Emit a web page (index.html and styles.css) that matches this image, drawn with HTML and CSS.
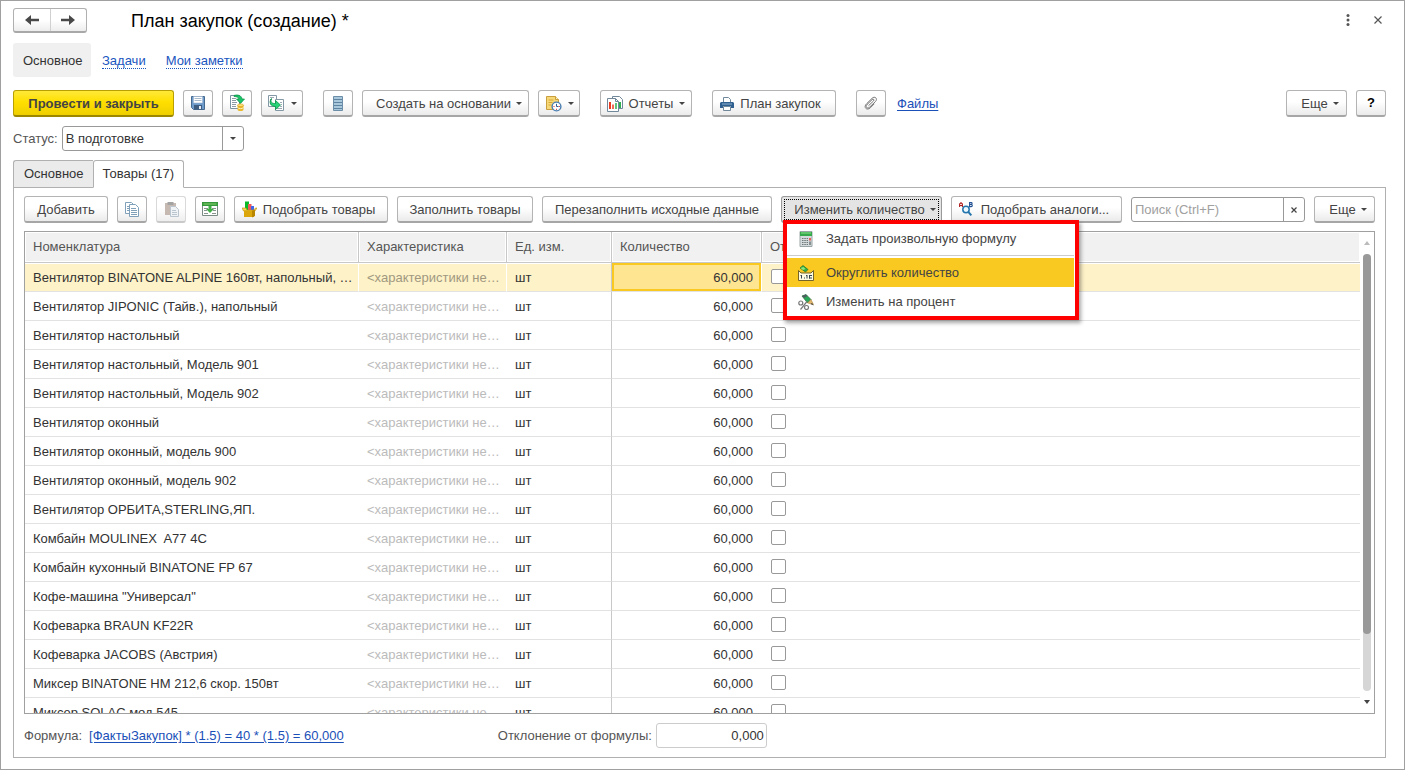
FILE: index.html
```html
<!DOCTYPE html>
<html lang="ru">
<head>
<meta charset="utf-8">
<title>План закупок (создание) *</title>
<link rel="stylesheet" href="styles.css">
</head>
<body>
<main class="window">
  <header class="titlebar">
    <div class="history">
      <button class="history-btn" type="button" aria-label="Назад"><svg width="14" height="10" viewBox="0 0 14 10"><path d="M6 0v3.800h8v2.400H6V10L0 5z" fill="#484848"/></svg></button>
      <button class="history-btn" type="button" aria-label="Вперед"><svg width="14" height="10" viewBox="0 0 14 10"><path d="M8 0v3.800H0v2.400h8V10l6-5z" fill="#484848"/></svg></button>
    </div>
    <h1 class="title">План закупок (создание) *</h1>
    <div class="window-actions">
      <button class="plain-btn" type="button" aria-label="Меню окна"><svg width="4" height="12" viewBox="0 0 4 12"><g fill="#555"><circle cx="2" cy="1.500" r="1.500"/><circle cx="2" cy="6" r="1.500"/><circle cx="2" cy="10.500" r="1.500"/></g></svg></button>
      <button class="plain-btn" type="button" aria-label="Закрыть"><svg width="8" height="8" viewBox="0 0 8 8"><path d="M.5.5l7 7M7.500.5l-7 7" stroke="#555" stroke-width="1.200"/></svg></button>
    </div>
  </header>

  <nav class="sections">
    <span class="section-current">Основное</span>
    <a class="section-link" href="#">Задачи</a>
    <a class="section-link" href="#">Мои заметки</a>
  </nav>

  <div class="toolbar commands">
    <div class="group">
      <button class="btn btn-primary" type="button">Провести и закрыть</button>
      <button class="btn btn-icon" type="button" aria-label="Записать"><svg width="14" height="14" viewBox="0 0 14 14"><path d="M.5.5h13v13h-11l-2-2z" fill="#6d9bcb" stroke="#46698f"/><path d="M2.500.5h9V7h-9z" fill="#fff" stroke="#9db6d0" stroke-width=".6"/><path d="M3.500 2.500h7M3.500 4.500h7" stroke="#a9b9cb"/><path d="M3 9h8v4.500H3z" fill="#3d5c80"/><path d="M8 10h2v3H8z" fill="#e6edf5"/></svg></button>
      <button class="btn btn-icon" type="button" aria-label="Провести"><svg width="16" height="18" viewBox="0 0 16 18"><path d="M1.500 1.500h9v13h-9z" fill="#fff" stroke="#7a93a3"/><path d="M3 4.500h4M3 6.500h4M3 8.500h5M3 10.500h4M3 12.500h4" stroke="#8b9aa5"/><path d="M5 1.500C9 0 13 2 13 5h2.500L11.500 9.500 7.500 5H10C10 3.500 7.500 2.500 5 2.500z" fill="#19c468" stroke="#0a8f45" stroke-width=".7"/><path d="M8.500 11v4.500c0 2 6 2 6 0V11z" fill="#e9b82c"/><ellipse cx="11.500" cy="11.200" rx="3" ry="1.300" fill="#ffe27a" stroke="#d19a15" stroke-width=".6"/><path d="M8.500 13.500c1 1.500 5 1.500 6 0" stroke="#fff3b8" fill="none"/></svg></button>
      <button class="btn btn-split" type="button" aria-label="Ввести на основании"><svg width="18" height="18" viewBox="0 0 18 18"><path d="M1.500 1.500h8v11h-8z" fill="#fff" stroke="#8598a5"/><path d="M3 3.500h4M3 5.500h2M3 7.500h1M3 9.500h2" stroke="#9aa9b3"/><path d="M8.500 5.500h8v11h-8z" fill="#fff" stroke="#8598a5"/><path d="M13 8.500h2M14 10.500h1M13 12.500h2M10 14.500h5" stroke="#9aa9b3"/><path d="M4.500 4.500C3 8 5 9.800 8.500 9.500V6.500L13.500 11 8.500 15.500V12.500C3.500 12.500 1.500 8.500 4.500 4.500z" fill="#26d477" stroke="#0a9148" stroke-width=".8"/></svg><span class="caret"></span></button>
    </div>
    <div class="group">
      <button class="btn btn-icon" type="button" aria-label="Структура"><svg width="10" height="15" viewBox="0 0 10 15"><path d="M.5.5h9v14h-9z" fill="#a9c8dc" stroke="#6d8ea8"/><path d="M1 3.500h8M1 6.500h8M1 9.500h8M1 12.500h8" stroke="#5f84a2"/></svg></button>
      <button class="btn w-create" type="button">Создать на основании<span class="caret"></span></button>
      <button class="btn btn-split" type="button" aria-label="Напоминание"><svg width="17" height="17" viewBox="0 0 17 17"><path d="M1.500 1.500h9l3 3v10h-12z" fill="#f6d878" stroke="#c99f3e"/><path d="M10.500 1.500v3h3" fill="#fff0b8" stroke="#c99f3e"/><path d="M3.500 5h5M3.500 7.500h4M3.500 10h3" stroke="#d8a936"/><circle cx="11.500" cy="11.500" r="4.400" fill="#fff" stroke="#4a7eb0" stroke-width="1.400"/><path d="M11.500 8.800v2.700h2" stroke="#2d5f91" fill="none"/><path d="M8.500 11.500h1M11.500 13.800v1M13.800 11.500h1" stroke="#e02020"/></svg><span class="caret"></span></button>
    </div>
    <div class="group">
      <button class="btn w-reports" type="button"><svg width="16" height="16" viewBox="0 0 16 16"><path d="M5.500.5h7l3 3v9h-10z" fill="#fff" stroke="#71879a"/><path d="M13 6v6" stroke="#2fae51" stroke-width="2"/><path d="M.5 2.500h8l3 3v10H.5z" fill="#fff" stroke="#71879a"/><path d="M8.500 2.500v3h3" fill="none" stroke="#71879a"/><path d="M3 6v7" stroke="#ee3b24" stroke-width="2"/><path d="M6 8.500V13" stroke="#ee3b24" stroke-width="1.500"/><path d="M9 7v6" stroke="#2fae51" stroke-width="1.500"/></svg>Отчеты<span class="caret"></span></button>
    </div>
    <div class="group">
      <button class="btn w-print" type="button"><svg width="14" height="14" viewBox="0 0 14 14"><path d="M3.500 5.500v-5h5l2 2v3" fill="#fff" stroke="#71879a"/><path d="M1 5h12l1 1v5h-3V9H3v2H0V6z" fill="#30608f"/><path d="M2 7h10" stroke="#8fb2d2"/><path d="M3.500 9.500h7v4h-7z" fill="#fff" stroke="#71879a"/></svg>План закупок</button>
    </div>
    <div class="group">
      <button class="btn btn-icon" type="button" aria-label="Прикрепить"><svg width="14" height="14" viewBox="0 0 14 14"><path d="m4.500 9.700 5-4.700c1.300-1.300-.2-2.500-1.400-1.400L3 8.600c-2.200 2.200.4 4.700 2.600 2.600l5.800-5.600c2.800-2.900-.6-6-3.300-3.300L2.500 7.800C-1 11.500 3 15 6.300 11.800l4-4" fill="none" stroke="#777" stroke-width="1"/></svg></button>
      <a class="link files" href="#">Файлы</a>
    </div>
    <div class="group group-end">
      <button class="btn w-more" type="button">Еще<span class="caret"></span></button>
      <button class="btn btn-icon help" type="button">?</button>
    </div>
  </div>

  <div class="status">
    <label class="field-label" for="status">Статус:</label>
    <div class="select-box">
      <select id="status" class="select"><option>В подготовке</option></select>
      <span class="select-arrow"><span class="caret"></span></span>
    </div>
  </div>

  <div class="tabs" role="tablist">
    <button class="tab" type="button" role="tab">Основное</button>
    <button class="tab tab-active" type="button" role="tab" aria-selected="true">Товары (17)</button>
  </div>

  <section class="panel">
    <div class="toolbar table-tools">
      <button class="btn w-add" type="button">Добавить</button>
      <button class="btn btn-icon" type="button" aria-label="Скопировать"><svg width="14" height="15" viewBox="0 0 14 15"><path d="M.5.5h6l2 2v9h-8z" fill="#fff" stroke="#7fa0b8"/><path d="M2 4.500h2M2 6.500h2M2 8.500h2" stroke="#7fa0b8"/><path d="M4.500 2.500h6l3 3v9h-9z" fill="#fff" stroke="#7fa0b8"/><path d="M6 6.500h5M6 8.500h6M6 10.500h6M6 12.500h6" stroke="#7fa0b8"/></svg></button>
      <button class="btn btn-icon btn-off" type="button" aria-label="Вставить"><svg width="15" height="16" viewBox="0 0 15 16"><path d="M1 2h11v12H1z" fill="#b9a8a0"/><path d="M3.500 1h6v3h-6z" fill="#8d8d8d"/><path d="M6.500 5.500h5l3 3v7h-8z" fill="#eef2f6" stroke="#a9b7c5"/><path d="M8 9.500h4M8 11.500h5M8 13.500h5" stroke="#a9b7c5"/></svg></button>
      <button class="btn btn-icon" type="button" aria-label="Загрузить"><svg width="16" height="14" viewBox="0 0 16 14"><path d="M.5 2.500h15v11H.5z" fill="#fff" stroke="#7a8a85"/><path d="M0 0h16v4H0z" fill="#35983d"/><path d="M1.500 2h13" stroke="#8bd36f"/><path d="M2 6.500h4M2 8.500h3M2 11.500h4M10 6.500h4M11 8.500h3M10 11.500h4" stroke="#88958f"/><path d="M6.500 4h3v3h2.500l-4 4-4-4h2.500z" fill="#3fae45"/></svg></button>
      <button class="btn w-pick" type="button"><svg width="15" height="17" viewBox="0 0 15 17"><path d="M3 .5h4V9H3z" fill="#08ba28"/><path d="M6 3h3.500v6H6z" fill="#ee5a5a"/><path d="M9 5h3v4H9z" fill="#4068e8"/><path d="M0 7h4l1 2h7l1.500-2H15l-2 3H1.500z" fill="#f5d653" stroke="#b98c08" stroke-width=".6"/><path d="M2 9.500h10V16H2z" fill="#dca60d"/><path d="M10 9.500 13 9v6l-3 1.500z" fill="#b98600"/></svg>Подобрать товары</button>
      <button class="btn w-fill" type="button">Заполнить товары</button>
      <button class="btn w-refill" type="button">Перезаполнить исходные данные</button>
      <div class="menu-anchor">
        <button class="btn btn-open w-change" type="button" aria-haspopup="menu" aria-expanded="true">Изменить количество<span class="caret"></span></button>
        <div class="menu" role="menu">
          <button class="menu-item" type="button" role="menuitem"><svg width="16" height="16" viewBox="0 0 16 16"><path d="M2 .5h12v15H2z" fill="#d5dbdc" stroke="#9aa5a7"/><path d="M2 1h12v4H2z" fill="#35a94b"/><path d="M3 2h10" stroke="#8be08b"/><path d="M4 7.500h6M4 9.500h6M4 11.500h6M4 13.500h6" stroke="#6d7778" stroke-dasharray="1.500 .8"/><path d="M12 7v2.500" stroke="#f03030" stroke-width="1.500"/><path d="M12 10.500V14" stroke="#6d7778" stroke-width="1.500"/></svg>Задать произвольную формулу</button>
          <div class="menu-rule" role="separator"></div>
          <button class="menu-item menu-item-active" type="button" role="menuitem"><svg width="16" height="16" viewBox="0 0 16 16"><path d="M2 3 5 .5l5 4L7.500 7z" fill="#2daf43" stroke="#276b2d" stroke-width=".7"/><path d="m2.500 3 3-1 2 2-2.500 1z" fill="#91e878"/><path d="M.5 5.500 3 8h10l2.500-2.500v10H.5z" fill="#fffbe0" stroke="#746429"/><path d="M3.500 10v3.500M2.500 10.500h1M6 13h1M9 10v3.500M8 10.500h1M11.500 10v3.500M11 10.500h3M11 13h3" stroke="#345" fill="none"/></svg>Округлить количество</button>
          <button class="menu-item" type="button" role="menuitem"><svg width="16" height="16" viewBox="0 0 16 16"><path d="m4 2 4-1.500 5 5-3.500 3.500z" fill="#29a657" stroke="#26713f" stroke-width=".7"/><path d="m4 2 4-1.500 1.500 1.500L6 4z" fill="#525c60"/><path d="m9.500 9 3.500-3.500 2.500 5z" fill="#e0b66c" stroke="#aa7c31" stroke-width=".5"/><path d="m14 9 1.800 2.500L12.500 10z" fill="#444"/><circle cx="2.800" cy="9" r="2" fill="none" stroke="#777" stroke-width="1.200"/><circle cx="8.500" cy="13.500" r="2" fill="none" stroke="#777" stroke-width="1.200"/><path d="M9 7.500 2.500 15.500" stroke="#777" stroke-width="1.200"/></svg>Изменить на процент</button>
        </div>
      </div>
      <button class="btn w-analog" type="button"><svg width="14" height="15" viewBox="0 0 14 15"><path d="M.6 5V2L2 .7 3.400 2v3M.6 3.500h2.800" fill="none" stroke="#b02020" stroke-width="1.100"/><path d="M10.600.6h1.600c1.200 0 1.200 1.800 0 1.900 1.500.1 1.500 2.100 0 2.100h-1.600zM10.600 2.500h1.600" fill="none" stroke="#1f4f93" stroke-width="1.100"/><circle cx="7" cy="7.500" r="3.200" fill="#edf8ff" stroke="#2576ad" stroke-width="1.500"/><path d="m9.300 9.800 3 3.500" stroke="#2576ad" stroke-width="2"/></svg>Подобрать аналоги...</button>
      <div class="search">
        <input class="search-input" type="text" placeholder="Поиск (Ctrl+F)" aria-label="Поиск">
        <button class="search-clear" type="button" aria-label="Очистить"><svg width="6" height="6" viewBox="0 0 6 6"><path d="M.5.5l5 5M5.500.5l-5 5" stroke="#444" stroke-width="1.200"/></svg></button>
      </div>
      <button class="btn w-more" type="button">Еще<span class="caret"></span></button>
    </div>

    <div class="grid">
      <div class="grid-view">
        <table class="goods">
          <colgroup><col class="c-name"><col class="c-spec"><col class="c-unit"><col class="c-qty"><col></colgroup>
          <thead><tr><th>Номенклатура</th><th>Характеристика</th><th>Ед. изм.</th><th>Количество</th><th>От</th></tr></thead>
          <tbody>
            <tr class="current"><td>Вентилятор BINATONE ALPINE 160вт, напольный, …</td><td class="spec">&lt;характеристики не…</td><td>шт</td><td class="qty">60,000</td><td><input class="tick" type="checkbox" aria-label="Отметка"></td></tr>
            <tr><td>Вентилятор JIPONIC (Тайв.), напольный</td><td class="spec">&lt;характеристики не…</td><td>шт</td><td class="qty">60,000</td><td><input class="tick" type="checkbox" aria-label="Отметка"></td></tr>
            <tr><td>Вентилятор настольный</td><td class="spec">&lt;характеристики не…</td><td>шт</td><td class="qty">60,000</td><td><input class="tick" type="checkbox" aria-label="Отметка"></td></tr>
            <tr><td>Вентилятор настольный, Модель 901</td><td class="spec">&lt;характеристики не…</td><td>шт</td><td class="qty">60,000</td><td><input class="tick" type="checkbox" aria-label="Отметка"></td></tr>
            <tr><td>Вентилятор настольный, Модель 902</td><td class="spec">&lt;характеристики не…</td><td>шт</td><td class="qty">60,000</td><td><input class="tick" type="checkbox" aria-label="Отметка"></td></tr>
            <tr><td>Вентилятор оконный</td><td class="spec">&lt;характеристики не…</td><td>шт</td><td class="qty">60,000</td><td><input class="tick" type="checkbox" aria-label="Отметка"></td></tr>
            <tr><td>Вентилятор оконный, модель 900</td><td class="spec">&lt;характеристики не…</td><td>шт</td><td class="qty">60,000</td><td><input class="tick" type="checkbox" aria-label="Отметка"></td></tr>
            <tr><td>Вентилятор оконный, модель 902</td><td class="spec">&lt;характеристики не…</td><td>шт</td><td class="qty">60,000</td><td><input class="tick" type="checkbox" aria-label="Отметка"></td></tr>
            <tr><td>Вентилятор ОРБИТА,STERLING,ЯП.</td><td class="spec">&lt;характеристики не…</td><td>шт</td><td class="qty">60,000</td><td><input class="tick" type="checkbox" aria-label="Отметка"></td></tr>
            <tr><td>Комбайн MOULINEX&nbsp; A77 4C</td><td class="spec">&lt;характеристики не…</td><td>шт</td><td class="qty">60,000</td><td><input class="tick" type="checkbox" aria-label="Отметка"></td></tr>
            <tr><td>Комбайн кухонный BINATONE FP 67</td><td class="spec">&lt;характеристики не…</td><td>шт</td><td class="qty">60,000</td><td><input class="tick" type="checkbox" aria-label="Отметка"></td></tr>
            <tr><td>Кофе-машина "Универсал"</td><td class="spec">&lt;характеристики не…</td><td>шт</td><td class="qty">60,000</td><td><input class="tick" type="checkbox" aria-label="Отметка"></td></tr>
            <tr><td>Кофеварка BRAUN KF22R</td><td class="spec">&lt;характеристики не…</td><td>шт</td><td class="qty">60,000</td><td><input class="tick" type="checkbox" aria-label="Отметка"></td></tr>
            <tr><td>Кофеварка JACOBS (Австрия)</td><td class="spec">&lt;характеристики не…</td><td>шт</td><td class="qty">60,000</td><td><input class="tick" type="checkbox" aria-label="Отметка"></td></tr>
            <tr><td>Миксер BINATONE HM 212,6 скор. 150вт</td><td class="spec">&lt;характеристики не…</td><td>шт</td><td class="qty">60,000</td><td><input class="tick" type="checkbox" aria-label="Отметка"></td></tr>
            <tr><td>Миксер SOLAC мод.545</td><td class="spec">&lt;характеристики не…</td><td>шт</td><td class="qty">60,000</td><td><input class="tick" type="checkbox" aria-label="Отметка"></td></tr>
          </tbody>
        </table>
      </div>
      <div class="scrollbar">
        <span class="arrow-up"></span>
        <div class="track"><div class="thumb"></div></div>
        <span class="arrow-down"></span>
      </div>
    </div>

    <footer class="summary">
      <span class="field-label">Формула:</span>
      <a class="link formula" href="#">[ФактыЗакупок] * (1.5) = 40 * (1.5) = 60,000</a>
      <label class="field-label deviation-label" for="deviation">Отклонение от формулы:</label>
      <input id="deviation" class="deviation" type="text" value="0,000" readonly>
    </footer>
  </section>
</main>
</body>
</html>
```
FILE: styles.css
```css
* { box-sizing: border-box; }

body {
  margin: 0;
  background: #fff;
  color: #333;
  font: 13px/16px "Liberation Sans", Arial, sans-serif;
}

button, input, select { font: inherit; color: inherit; }
svg { flex: none; display: block; }

.window {
  display: flex;
  flex-direction: column;
  height: 100vh;
  padding: 7px 18px 11px 12px;
  border: 1px solid #a0a0a0;
}

/* Title */
.titlebar { display: flex; align-items: center; height: 25px; }
.history {
  display: flex;
  width: 74px;
  height: 25px;
  border: 1px solid #b0b0b0;
  border-bottom: 2px solid #a8a8a8;
  border-radius: 3px;
  background: linear-gradient(#fff 50%, #ededed);
}
.history-btn {
  display: flex;
  flex: 1;
  align-items: center;
  justify-content: center;
  padding: 0;
  border: 0;
  background: none;
}
.history-btn + .history-btn { border-left: 1px solid #d0d0d0; }
.title { margin: 0 0 0 44px; font-size: 18px; line-height: 24px; font-weight: 400; color: #000; }
.window-actions { display: flex; align-items: center; gap: 16px; height: 23px; margin: 0 1px 2px auto; }
.plain-btn { display: flex; align-items: center; justify-content: center; width: 14px; height: 16px; padding: 0; border: 0; background: none; }

/* Sections */
.sections { display: flex; align-items: center; gap: 20px; height: 34px; margin-top: 10px; }
.section-current { display: flex; align-items: center; width: 78px; height: 34px; padding: 2px 9px 0 10px; margin-right: -9px; border-radius: 3px; background: #f0f0f0; }
.section-link { padding-top: 2px; color: #1a56c0; text-decoration: none; line-height: 14px; border-bottom: 1px dotted #1a56c0; }
.link { color: #1a50b8; text-decoration: underline; text-underline-offset: 2px; }

/* Buttons */
.toolbar { display: flex; align-items: center; }
.commands { gap: 20px; margin-top: 13px; }
.group { display: flex; align-items: center; gap: 9px; }
.group-end { margin-left: auto; }
.btn {
  display: flex;
  flex: none;
  align-items: center;
  justify-content: center;
  height: 27px;
  padding: 1px 5px 0;
  border: 1px solid #b4b4b4;
  border-bottom: 2px solid #a6a6a6;
  border-radius: 3px;
  background: linear-gradient(#fff 45%, #ebebeb);
  color: #444;
  white-space: nowrap;
}
.btn svg + .caret { margin-left: 6px; }
.btn-primary {
  min-width: 161px;
  border-color: #b9a000;
  border-bottom-color: #9c8700;
  background: linear-gradient(#ffe93a, #ffdf00 45%, #efcf00);
  font-weight: 700;
}
.btn-icon { width: 30px; padding: 0; }
.btn-split { width: 42px; padding: 0; }
.btn-off { border-color: #d0d0d0; border-bottom-color: #bcbcbc; opacity: .8; }
.btn-open { border-color: #999; background: #e4e4e4; outline: 1px dotted #000; outline-offset: -4px; }
.help { color: #000; font-weight: 700; }
.caret {
  width: 0;
  margin-left: 5px;
  border: 3px solid transparent;
  border-top-color: #444;
  border-bottom: 0;
}
.w-create { min-width: 167px; padding-left: 12px; }
.w-reports { min-width: 92px; }
.w-reports svg { margin-right: 6px; }
.w-print { min-width: 124px; padding-right: 12px; }
.w-print svg { margin-right: 6px; }
.w-more { min-width: 61px; padding-left: 12px; }
.w-add { min-width: 84px; }
.w-pick { min-width: 154px; padding-right: 10px; }
.w-pick svg { margin-right: 6px; }
.w-fill { min-width: 136px; }
.w-refill { min-width: 230px; }
.w-change { min-width: 161px; padding-left: 12px; }
.w-analog { min-width: 171px; padding-right: 10px; }
.w-analog svg { margin-right: 8px; }
.files { margin-left: 2px; }

/* Status */
.status { display: flex; align-items: center; gap: 4px; margin-top: 9px; }
.field-label { color: #555; }
.select-box { display: flex; width: 182px; height: 25px; border: 1px solid #999; border-radius: 3px; }
.select { flex: 1; min-width: 0; padding: 0 3px; border: 0; background: none; appearance: none; outline: 0; }
.select-arrow { display: flex; align-items: center; justify-content: center; width: 21px; border-left: 1px solid #999; }
.select-arrow .caret { margin: 0; }

/* Tabs */
.tabs { display: flex; margin-top: 9px; }
.tab { height: 28px; padding: 0 9px 0 10px; border: 1px solid #b0b0b0; border-right: 0; border-radius: 3px 0 0 0; background: #ebebeb; }
.tab-active { z-index: 1; padding: 0 9px; border-right: 1px solid #b0b0b0; border-bottom-color: #fff; border-radius: 3px 3px 0 0; background: #fff; }

.panel {
  display: flex;
  flex: 1;
  flex-direction: column;
  min-height: 0;
  margin-top: -1px;
  padding: 8px 10px 9px;
  border: 1px solid #b0b0b0;
}
.table-tools { gap: 9px; }

/* Quantity menu */
.menu-anchor { position: relative; flex: none; }
.menu {
  position: absolute;
  z-index: 5;
  top: 24px;
  left: 2px;
  width: 296px;
  padding: 0 1px 0 0;
  border: 4px solid #f00;
  background: #fff;
  box-shadow: 2px 3px 4px rgba(0, 0, 0, .35);
}
.menu-item {
  display: flex;
  align-items: center;
  gap: 12px;
  width: 100%;
  height: 29px;
  padding: 0 11px;
  border: 0;
  background: none;
  color: #444;
  text-align: left;
}
.menu-item-active { background: #fac921; }
.menu-rule { height: 1px; margin: 2px 0; background: #ccc; }

.search { display: flex; flex: 1; min-width: 0; height: 25px; border: 1px solid #999; border-radius: 3px; }
.search-input { flex: 1; min-width: 0; padding: 0 3px; border: 0; background: none; outline: 0; }
.search-input::placeholder { color: #a0a0a0; }
.search-clear { display: flex; align-items: center; justify-content: center; width: 21px; padding: 0; border: 0; border-left: 1px solid #999; background: none; }

/* Goods */
.grid { display: flex; flex: 1; min-height: 0; margin-top: 8px; border: 1px solid #a0a0a0; }
.grid-view { flex: 1; min-width: 0; overflow: hidden; }
.goods { width: 100%; border-spacing: 0; table-layout: fixed; }
.c-name { width: 334px; }
.c-spec { width: 148px; }
.c-unit { width: 105px; }
.c-qty { width: 150px; }
.goods th {
  height: 31px;
  padding: 0 8px;
  border-right: 1px solid #c8c8c8;
  border-bottom: 1px solid #c8c8c8;
  background: #f1f1f1;
  box-shadow: inset 0 0 0 1px #fff;
  color: #555;
  font-weight: 400;
  text-align: left;
}
.goods td {
  height: 29px;
  padding: 2px 8px 0;
  border-bottom: 1px solid #e2e2e2;
  overflow: hidden;
  white-space: nowrap;
}
.goods td:last-child { padding: 0 9px 1px; }
.goods th:last-child { border-right: 0; }
.goods td:nth-child(3) { border-right: 1px solid #c8c8c8; }
.goods .spec { color: #bbb; }
.goods .qty { padding-right: 9px; text-align: right; }
.current td { background: #fef2c8; border-right: 1px solid #fff; box-shadow: inset 0 1px #fff; }
.current td:last-child { border-right: 0; }
.goods .current .spec { color: #a09880; }
.goods .current .qty { padding-right: 8px; background: #fee591; box-shadow: inset 0 0 0 2px #fac921; }
.tick { display: block; appearance: none; width: 15px; height: 15px; margin: 0; border: 1px solid #999; border-radius: 2px; background: #fff; }

.scrollbar { display: flex; flex: none; flex-direction: column; align-items: center; gap: 9px; width: 14px; padding: 9px 0; }
.arrow-up { border: 3px solid transparent; border-bottom: 4px solid #bbb; border-top: 0; }
.arrow-down { border: 3px solid transparent; border-top: 4px solid #444; border-bottom: 0; }
.track { flex: 1; width: 8px; border-radius: 4px; background: #d6d6d6; }
.thumb { height: 87%; border-radius: 4px; background: #999; }

.summary { display: flex; align-items: center; margin-top: 9px; }
.formula { margin-left: 7px; }
.deviation-label { margin-left: 154px; }
.deviation { width: 111px; height: 25px; margin-left: 4px; padding: 0 2px; border: 1px solid #ccc; border-radius: 3px; text-align: right; }
```
